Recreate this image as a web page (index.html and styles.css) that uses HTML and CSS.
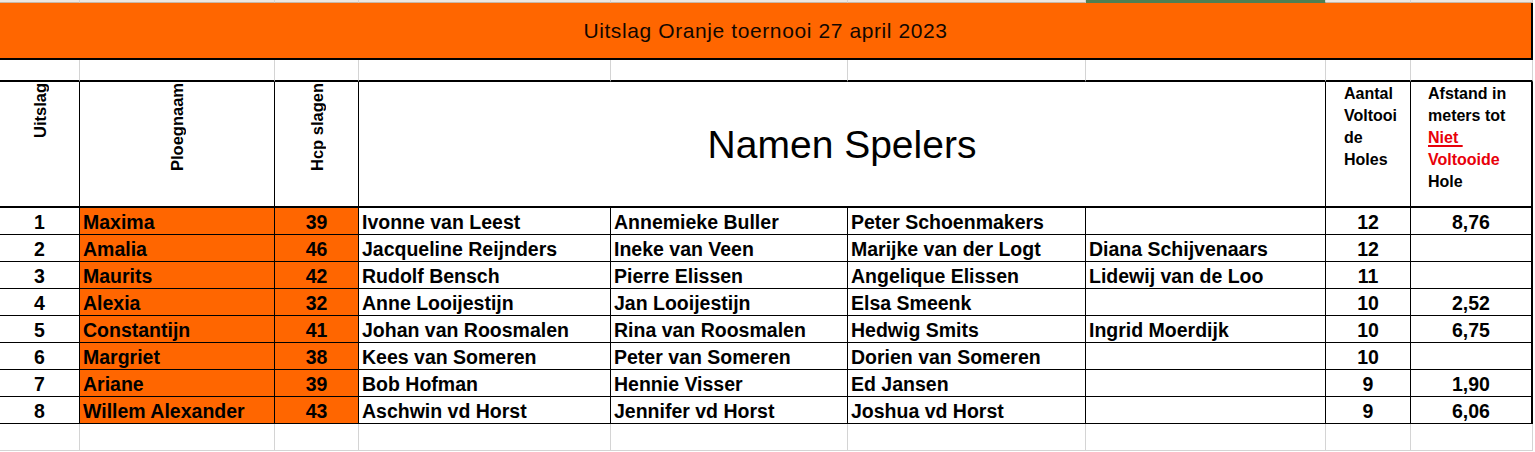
FILE: index.html
```html
<!DOCTYPE html>
<html lang="nl">
<head>
<meta charset="utf-8">
<title>Uitslag Oranje toernooi 27 april 2023</title>
<link rel="stylesheet" href="styles.css">
</head>
<body>
<div class="sheet">
  <div class="strip"></div><div class="strip"></div><div class="strip"></div><div class="strip"></div><div class="strip"></div><div class="strip"></div><div class="strip sel"></div><div class="strip"></div><div class="strip"></div>

  <div class="title">Uitslag Oranje toernooi 27 april 2023</div>

  <div class="gap"></div><div class="gap"></div><div class="gap"></div><div class="gap"></div><div class="gap"></div><div class="gap"></div><div class="gap"></div><div class="gap"></div><div class="gap"></div>

  <div class="hd rot"><span>Uitslag</span></div>
  <div class="hd rot"><span>Ploegnaam</span></div>
  <div class="hd rot"><span>Hcp slagen</span></div>
  <div class="hd names">Namen Spelers</div>
  <div class="hd wrap">Aantal<br>Voltooi<br>de<br>Holes</div>
  <div class="hd wrap last">Afstand in<br>meters tot<br><span class="red u">Niet&nbsp;</span><br><span class="red">Voltooide</span><br>Hole</div>

  <div class="c num">1</div><div class="c team">Maxima</div><div class="c hcp">39</div><div class="c name">Ivonne van Leest</div><div class="c name">Annemieke Buller</div><div class="c name">Peter Schoenmakers</div><div class="c name"></div><div class="c num">12</div><div class="c num last">8,76</div>
  <div class="c num">2</div><div class="c team">Amalia</div><div class="c hcp">46</div><div class="c name">Jacqueline Reijnders</div><div class="c name">Ineke van Veen</div><div class="c name">Marijke van der Logt</div><div class="c name">Diana Schijvenaars</div><div class="c num">12</div><div class="c num last"></div>
  <div class="c num">3</div><div class="c team">Maurits</div><div class="c hcp">42</div><div class="c name">Rudolf Bensch</div><div class="c name">Pierre Elissen</div><div class="c name">Angelique Elissen</div><div class="c name">Lidewij van de Loo</div><div class="c num">11</div><div class="c num last"></div>
  <div class="c num">4</div><div class="c team">Alexia</div><div class="c hcp">32</div><div class="c name">Anne Looijestijn</div><div class="c name">Jan Looijestijn</div><div class="c name">Elsa Smeenk</div><div class="c name"></div><div class="c num">10</div><div class="c num last">2,52</div>
  <div class="c num">5</div><div class="c team">Constantijn</div><div class="c hcp">41</div><div class="c name">Johan van Roosmalen</div><div class="c name">Rina van Roosmalen</div><div class="c name">Hedwig Smits</div><div class="c name">Ingrid Moerdijk</div><div class="c num">10</div><div class="c num last">6,75</div>
  <div class="c num">6</div><div class="c team">Margriet</div><div class="c hcp">38</div><div class="c name">Kees van Someren</div><div class="c name">Peter van Someren</div><div class="c name">Dorien van Someren</div><div class="c name"></div><div class="c num">10</div><div class="c num last"></div>
  <div class="c num">7</div><div class="c team">Ariane</div><div class="c hcp">39</div><div class="c name">Bob Hofman</div><div class="c name">Hennie Visser</div><div class="c name">Ed Jansen</div><div class="c name"></div><div class="c num">9</div><div class="c num last">1,90</div>
  <div class="c num">8</div><div class="c team">Willem Alexander</div><div class="c hcp">43</div><div class="c name">Aschwin vd Horst</div><div class="c name">Jennifer vd Horst</div><div class="c name">Joshua vd Horst</div><div class="c name"></div><div class="c num">9</div><div class="c num last">6,06</div>

  <div class="blank"></div><div class="blank"></div><div class="blank"></div><div class="blank"></div><div class="blank"></div><div class="blank"></div><div class="blank"></div><div class="blank"></div><div class="blank"></div>
</div>
</body>
</html>
```
FILE: styles.css
```css
html, body {
  margin: 0;
  padding: 0;
  background: #fff;
}

body {
  font-family: "Liberation Sans", Arial, sans-serif;
  color: #000;
}

.sheet {
  display: grid;
  grid-template-columns: 80px 195px 84px 252px 237px 238px 240px 85px 122px;
  width: 1533px;
}

.sheet > div {
  box-sizing: border-box;
}

/* top strip (row above the title) */
.strip {
  height: 3px;
  background: #ece7e2;
  border-right: 1px solid #d4d4d4;
  border-bottom: 1px solid #c9b8a8;
}

.strip.sel {
  background: #4f7f52;
  border-bottom-color: #4f7f52;
}

/* title bar */
.title {
  grid-column: 1 / -1;
  height: 57px;
  background: #ff6600;
  border-right: 2px solid #000;
  border-bottom: 2px solid #000;
  display: flex;
  align-items: center;
  justify-content: center;
  font-size: 21px;
  letter-spacing: 0.6px;
  color: #120700;
  padding-top: 1px;
}

/* empty row between title and header */
.gap {
  height: 22px;
  border-right: 1px solid #d4d4d4;
  border-bottom: 2px solid #000;
}

/* header row */
.hd {
  height: 126px;
  border-right: 1px solid #000;
  border-bottom: 2px solid #000;
  font-weight: bold;
}

.hd.last {
  border-right-width: 2px;
}

.rot {
  display: flex;
  justify-content: center;
  align-items: flex-start;
  padding-top: 1px;
}

.rot span {
  writing-mode: vertical-rl;
  transform: rotate(180deg);
  font-size: 16.5px;
  line-height: 20px;
  white-space: nowrap;
}

.names {
  grid-column: span 4;
  display: flex;
  align-items: center;
  justify-content: center;
  font-weight: normal;
  font-size: 39px;
  padding-top: 2px;
}

.wrap {
  font-size: 16px;
  line-height: 22px;
  padding: 1px 0 0 18px;
}

.wrap.last {
  padding-left: 17px;
}

.red {
  color: #e8000a;
}

.u {
  text-decoration: underline;
  text-decoration-thickness: 2px;
  text-underline-offset: 2px;
}

/* data cells */
.c {
  height: 27px;
  border-right: 1px solid #000;
  border-bottom: 1px solid #000;
  font-weight: bold;
  font-size: 19.5px;
  line-height: 22px;
  padding-top: 3px;
  white-space: nowrap;
  overflow: hidden;
}

.c.last {
  border-right-width: 2px;
}

.num {
  text-align: center;
}

.team {
  background: #ff6600;
  padding-left: 3px;
}

.hcp {
  background: #ff6600;
  text-align: center;
}

.name {
  padding-left: 3px;
}

/* empty row below the table */
.blank {
  height: 27px;
  border-right: 1px solid #d4d4d4;
  border-bottom: 1px solid #d4d4d4;
}
```
